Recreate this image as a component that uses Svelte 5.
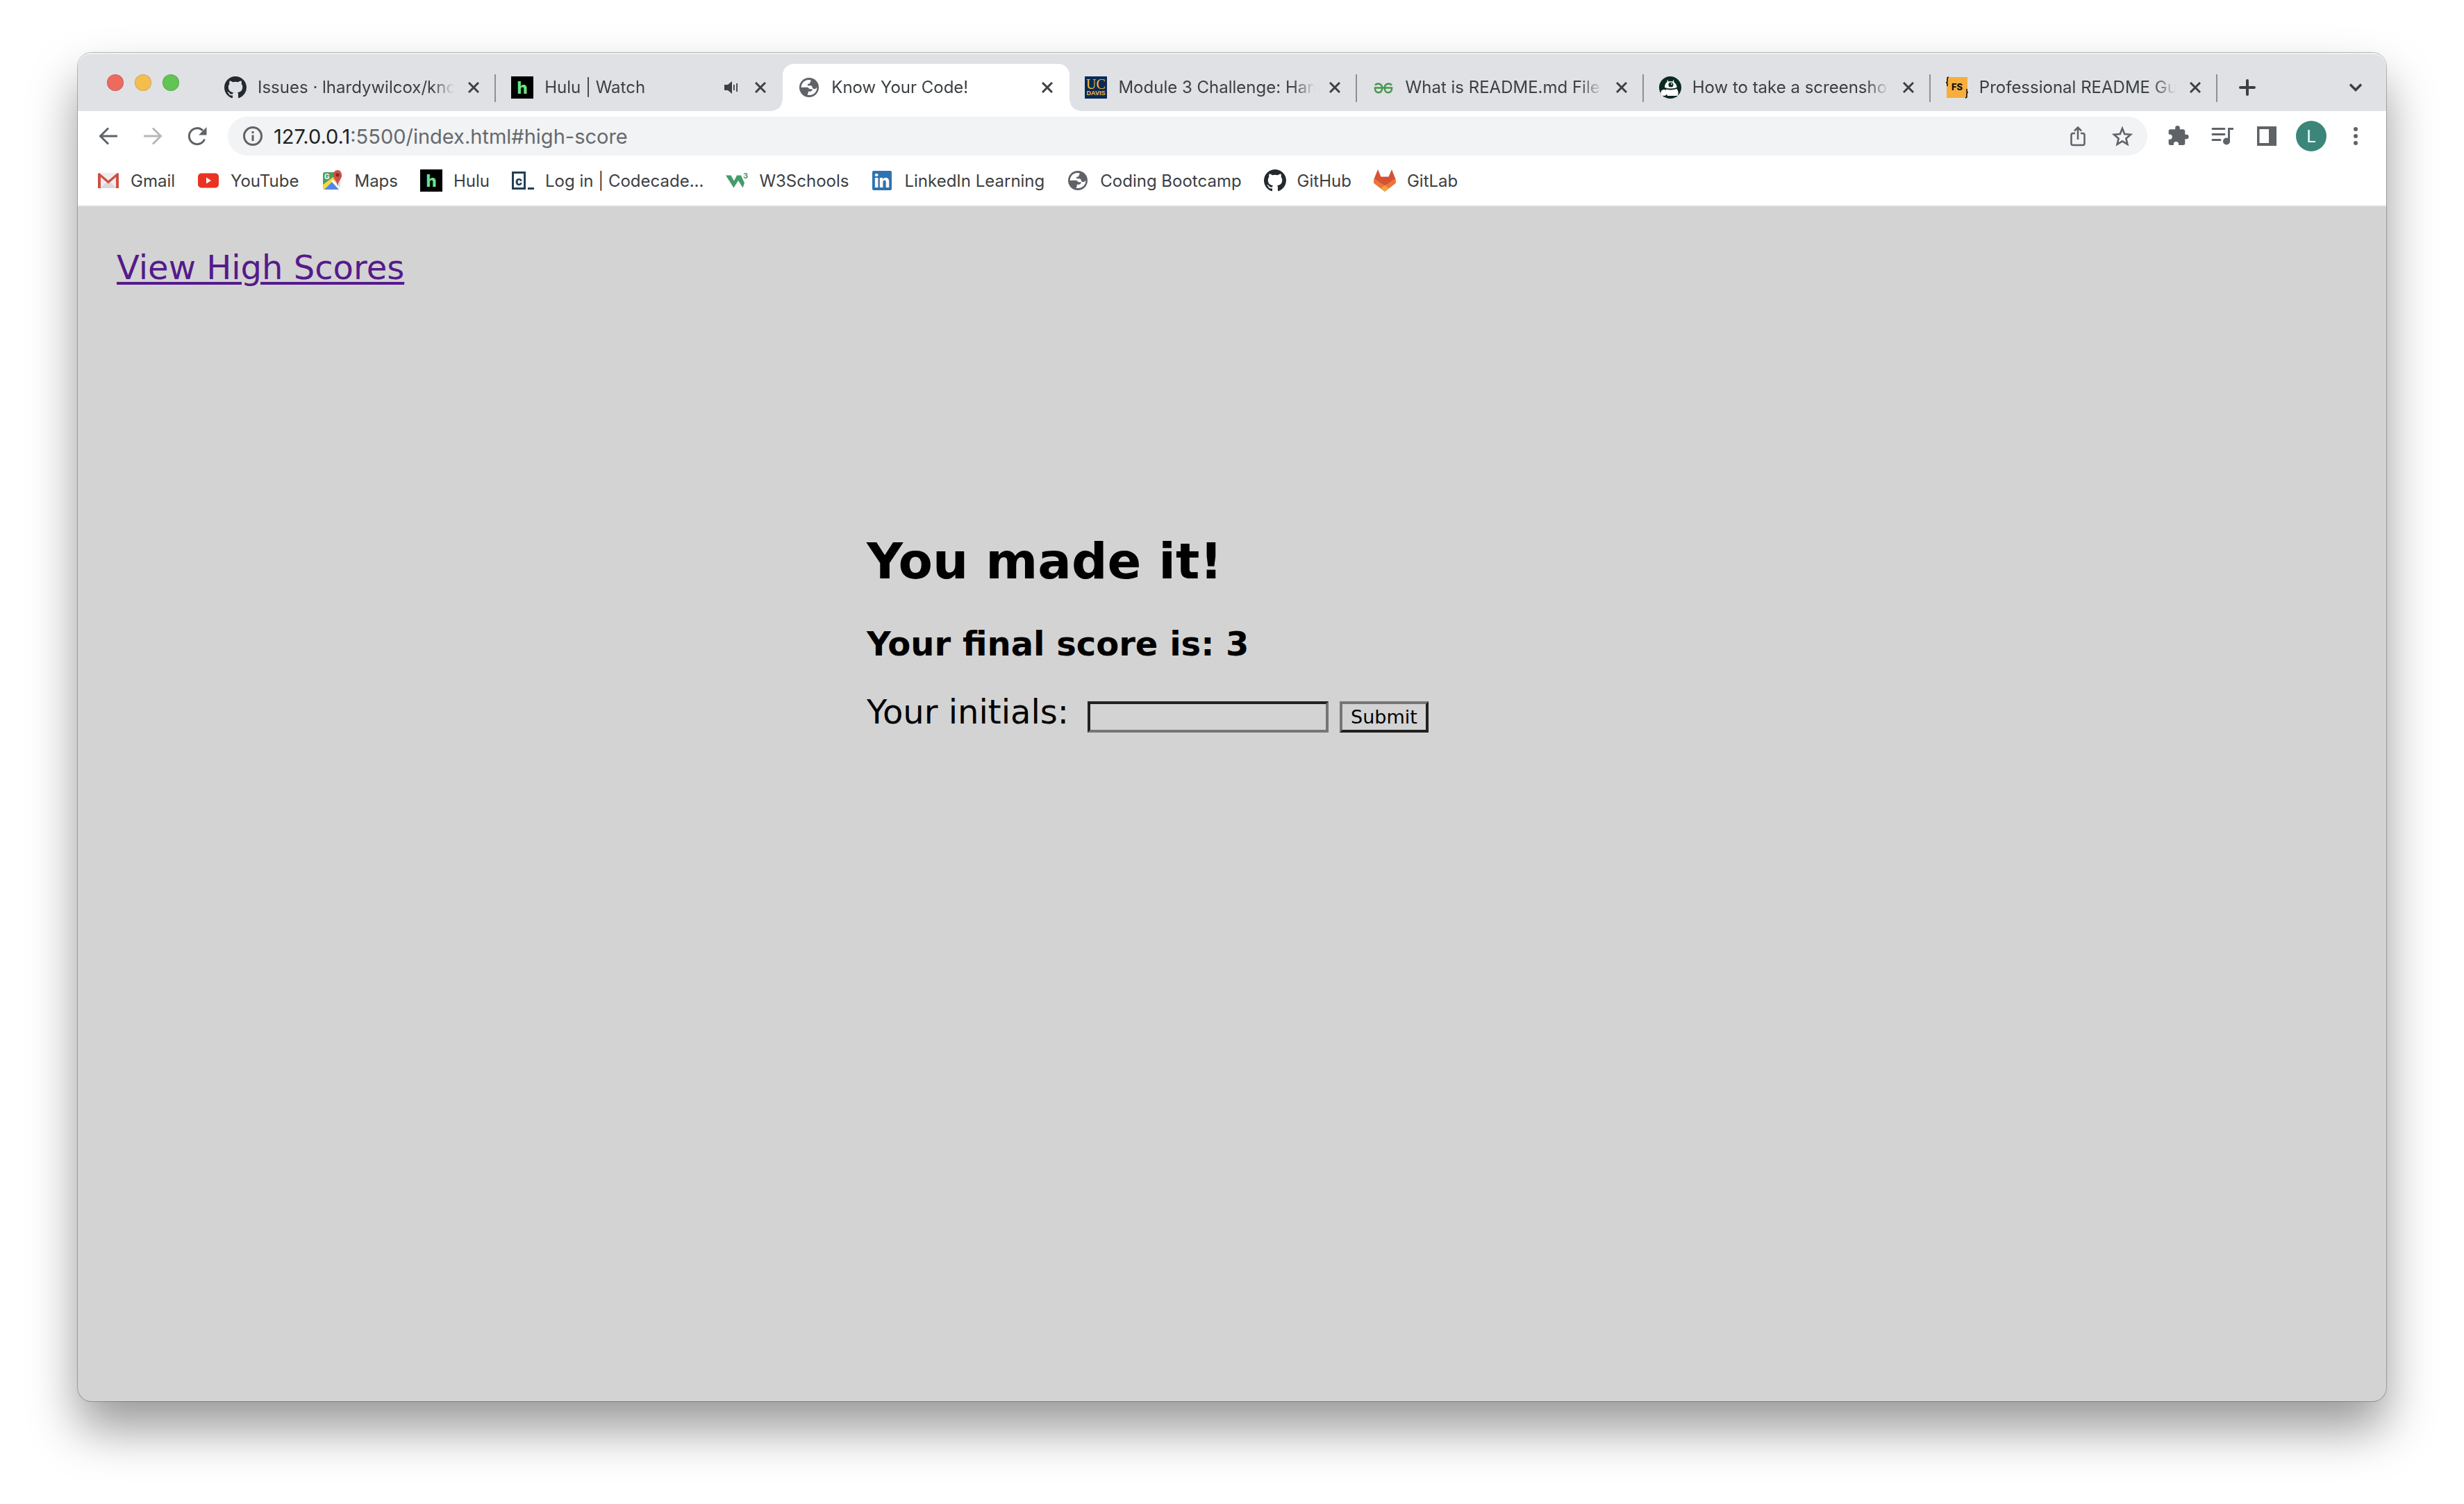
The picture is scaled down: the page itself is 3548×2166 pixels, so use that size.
<script>
  const tabs = [
    { icon: 'github', title: 'Issues · lhardywilcox/know' },
    { icon: 'hulu', title: 'Hulu | Watch', audio: true },
    { icon: 'globe', title: 'Know Your Code!', active: true },
    { icon: 'ucdavis', title: 'Module 3 Challenge: Hard' },
    { icon: 'geeks', title: 'What is README.md File?' },
    { icon: 'octo', title: 'How to take a screenshot' },
    { icon: 'fullstack', title: 'Professional README Gui' }
  ];
  const bookmarks = [
    { icon: 'gmail', title: 'Gmail' },
    { icon: 'youtube', title: 'YouTube' },
    { icon: 'maps', title: 'Maps' },
    { icon: 'hulu', title: 'Hulu' },
    { icon: 'codecademy', title: 'Log in | Codecade...' },
    { icon: 'w3', title: 'W3Schools' },
    { icon: 'linkedin', title: 'LinkedIn Learning' },
    { icon: 'globe', title: 'Coding Bootcamp' },
    { icon: 'github', title: 'GitHub' },
    { icon: 'gitlab', title: 'GitLab' }
  ];
  let initials = $state('');
</script>

{#snippet site(name)}
  <svg class="site" viewBox="0 0 32 32" aria-hidden="true">
    {#if name === 'github'}
      <path fill="#24292f" transform="scale(2)" d="M8 0C3.58 0 0 3.58 0 8c0 3.54 2.29 6.53 5.47 7.59.4.07.55-.17.55-.38 0-.19-.01-.82-.01-1.49-2.01.37-2.53-.49-2.69-.94-.09-.23-.48-.94-.82-1.13-.28-.15-.68-.52-.01-.53.63-.01 1.08.58 1.23.82.72 1.21 1.87.87 2.33.66.07-.52.28-.87.51-1.07-1.78-.2-3.64-.89-3.64-3.95 0-.87.31-1.59.82-2.15-.08-.2-.36-1.02.08-2.12 0 0 .67-.21 2.2.82.64-.18 1.32-.27 2-.27s1.36.09 2 .27c1.53-1.04 2.2-.82 2.2-.82.44 1.1.16 1.92.08 2.12.51.56.82 1.27.82 2.15 0 3.07-1.87 3.75-3.65 3.95.29.25.54.73.54 1.48 0 1.07-.01 1.93-.01 2.2 0 .21.15.46.55.38A8.01 8.01 0 0 0 16 8c0-4.42-3.58-8-8-8z" />
    {:else if name === 'hulu'}
      <rect width="32" height="32" fill="#000" />
      <text x="16" y="25" text-anchor="middle" font-size="24" font-weight="800" fill="#66e589">h</text>
    {:else if name === 'globe'}
      <circle cx="16" cy="16" r="14" fill="#5f6368" />
      <path fill="#fff" d="M18 5.500C11 3.500 4.500 9.500 4.700 16L9.300 15.700H12.500C16 15.700 15.500 18.300 17.500 18.300H20.700Q20.500 21.500 18 21.700H14.700V24L13.500 26.800C21 28.500 28 23 27.300 15.800Q26 18.200 24 18.200Q21 18 20.700 15.500Q20.500 13.300 18 13.300H14V10.700H16Q17.500 10.500 17.500 8.500Q18.700 8 18.700 5.800z" />
    {:else if name === 'ucdavis'}
      <rect width="32" height="32" fill="#0b2a55" />
      <text class="serif" x="16" y="18" text-anchor="middle" font-size="20" fill="#f5c044">UC</text>
      <text class="sans" x="16" y="27" text-anchor="middle" font-size="9" font-weight="700" fill="#f5c044">DAVIS</text>
    {:else if name === 'geeks'}
      <path d="M4 12.500q2-2 5-2a6 6 0 0 1 5 8a5 5 0 0 1-10-.5v-1.500h24v1.500a5 5 0 0 1-10 .5a6 6 0 0 1 5-8q3 0 5 2" fill="none" stroke="#4a9650" stroke-width="2.500" />
    {:else if name === 'octo'}
      <circle cx="16" cy="16" r="16" fill="#0d2a20" />
      <path fill="#fff" d="M12 4.500l1.500 3q3-1 6 0l1.500-3 .5 4q4 2.500 4 7.500-9 3-17.500 0 0-5.500 3.500-8z" />
      <circle cx="17" cy="12" r="3.500" fill="#0d2a20" />
      <circle cx="18" cy="11" r="1" fill="#fff" />
      <path fill="#fff" d="M10 18.500q8 2 15.500-.5 3.500 5 1 10H12q-2-4-2-9.500z" />
      <circle cx="7" cy="23.500" r="4.500" fill="#fff" />
      <path d="M6 28.500q10 2 20 0" fill="none" stroke="#0d2a20" stroke-width="1.500" />
    {:else if name === 'fullstack'}
      <rect x="1" y="1" width="30" height="30" fill="#f7ae3c" />
      <text x="16" y="20" text-anchor="middle" font-size="13" font-weight="800" fill="#111">FS</text>
      <path d="M4 1Q2 1 2 4v3q0 2-2 2q2 0 2 2v3M28 31q2 0 2-3v-3q0-2 2-2q-2 0-2-2v-3" fill="none" stroke="#111" stroke-width="1.600" />
    {:else if name === 'gmail'}
      <rect x="1" y="5" width="30" height="22" rx="2" fill="#eee" />
      <path fill="#d8d8d8" d="M4 27l12-11 12 11z" />
      <path fill="#d04f41" d="M1 27V7q0-2 2-2l13 11L29 5q2 0 2 2v20h-4V11L16 20.500 5 11v16z" />
    {:else if name === 'youtube'}
      <rect x="1" y="5.500" width="30" height="21" rx="5" fill="#ea3323" />
      <path fill="#fff" d="M13 11.500v9l7-4.500z" />
    {:else if name === 'maps'}
      <rect x="3" y="4" width="25" height="25" rx="3" fill="#4a9f63" />
      <path fill="#dcdcdc" d="M17 17l11-4v14z" />
      <path fill="#f9d648" d="M3 22L19 10l4 6L5 29H3z" />
      <path fill="#5187ec" d="M5 29l11-11 11 11z" />
      <path fill="#fff" d="M15 17l2-2 11 11v3h-2z" />
      <text x="5" y="14" font-size="10" font-weight="700" fill="#fff">G</text>
      <path fill="#cf5143" d="M24 24q-1-6-4-9.500C15.500 9 18.500 1 24 1s8.500 8 4 13.500Q25 18 24 24z" />
      <circle cx="24" cy="8" r="2.500" fill="#7b2a24" />
    {:else if name === 'codecademy'}
      <rect x="1.500" y="4.500" width="17" height="23" fill="#fff" stroke="#204056" stroke-width="3" />
      <text x="10" y="22.500" text-anchor="middle" font-size="17" font-weight="800" fill="#204056">c</text>
      <path fill="#204056" d="M23 26h9v3h-9z" />
    {:else if name === 'w3'}
      <path fill="#459b6c" d="M0 8.500h7.500l4.500 8 4-8h6l5 11-2.500 7-6.500-10.500-6.500 10.500z" />
      <text x="25" y="13" font-size="11" font-weight="700" fill="#459b6c">3</text>
    {:else if name === 'linkedin'}
      <rect x="2" y="2" width="28" height="28" rx="2" fill="#2e73b0" />
      <text x="16" y="26" text-anchor="middle" font-size="25" font-weight="800" fill="#fff">in</text>
    {:else if name === 'gitlab'}
      <path fill="#d65136" d="M0 15L6 0l4.500 10.500h11L26 0l6 15-16 8.500z" />
      <path fill="#ed7638" d="M1 13l15 10.500L31 13l1 4q.5 2-1 3.500L16 32 1 20.500Q-.5 19 0 17z" />
      <path fill="#f0a63f" d="M16 22.500l5.500 5L16 32l-5.500-4.500z" />
    {/if}
  </svg>
{/snippet}

{#snippet cross()}
  <svg class="cross" viewBox="0 0 16 16" aria-hidden="true"><path d="M1 1l14 14M15 1L1 15" /></svg>
{/snippet}

<div class="desktop">
  <div class="window">
    <header class="strip">
      <div class="lights">
        <button class="light red" aria-label="Close window"></button>
        <button class="light amber" aria-label="Minimise window"></button>
        <button class="light green" aria-label="Zoom window"></button>
      </div>
      <div class="tabs" role="tablist">
        {#each tabs as tab}
          <div class="tab" class:active={tab.active} role="tab" tabindex="0" aria-selected={!!tab.active}>
            {@render site(tab.icon)}
            <span class="title">{tab.title}</span>
            {#if tab.audio}
              <svg class="audio" viewBox="0 0 24 18" aria-hidden="true">
                <path fill="#3c4043" d="M0 5h5l6-5v18l-6-5H0zM13 5h1.800v8H13zM17.200 3H19v12h-1.800z" />
              </svg>
            {/if}
            <button class="close" aria-label="Close tab">{@render cross()}</button>
          </div>
        {/each}
      </div>
      <div class="strip-end">
        <button aria-label="New tab">
          <svg width="24" height="24" viewBox="0 0 24 24"><path d="M12 2v20M2 12h20" fill="none" stroke="#3c4043" stroke-width="4" stroke-linecap="round" /></svg>
        </button>
        <button aria-label="Search tabs">
          <svg width="18" height="12" viewBox="0 0 18 12"><path d="M1 1.500l8 8 8-8" fill="none" stroke="#3c4043" stroke-width="3.500" /></svg>
        </button>
      </div>
    </header>

    <nav class="toolbar" aria-label="Navigation">
      <button class="tool" aria-label="Back">
        <svg viewBox="0 0 32 32"><path class="line" d="M29 16H5M16 4.500L4.500 16 16 27.500" /></svg>
      </button>
      <button class="tool faint" aria-label="Forward" disabled>
        <svg viewBox="0 0 32 32"><path class="line" d="M3 16h24M16 4.500L27.500 16 16 27.500" /></svg>
      </button>
      <button class="tool" aria-label="Reload">
        <svg viewBox="0 0 32 32"><path class="line" d="M26.500 20.500a11.500 11.500 0 1 1-2.500-12.500" /><path fill="#5f6368" d="M29.500 3v11.500H18z" /></svg>
      </button>
      <div class="omnibox">
        <svg class="info" viewBox="0 0 28 28" aria-hidden="true">
          <circle cx="14" cy="14" r="12.500" fill="none" stroke="#5f6368" stroke-width="3" />
          <path fill="#5f6368" d="M12.500 7h3v3h-3zM12.500 12.500h3V21h-3z" />
        </svg>
        <a class="url" href="#high-score"><b>127.0.0.1</b>:5500/index.html#high-score</a>
        <button class="tool" aria-label="Share">
          <svg viewBox="0 0 32 32"><path d="M12 12H9q-2.500 0-2.500 2.500v12Q6.500 29 9 29h14q2.500 0 2.500-2.500v-12Q25.500 12 23 12h-3M16 21V4M11 8.500L16 3.500l5 5" fill="none" stroke="#5f6368" stroke-width="2.500" /></svg>
        </button>
        <button class="tool" aria-label="Bookmark this page">
          <svg viewBox="0 0 32 32"><path d="M16 5l3.300 8 8.700.7-6.600 5.700 2 8.400L16 23.300l-7.400 4.500 2-8.400L4 13.700l8.700-.7z" fill="none" stroke="#5f6368" stroke-width="2.600" /></svg>
        </button>
      </div>
      <button class="tool" aria-label="Extensions">
        <svg viewBox="0 0 32 32"><path fill="#5f6368" d="M28.300 13.700h-2V8.900a2.700 2.700 0 0 0-2.600-2.600h-4.900v-2a3.300 3.300 0 0 0-6.600 0v2H5.300a2.600 2.600 0 0 0-2.600 2.600v4.600h1.500a3.600 3.600 0 0 1 0 7.200H2.700v5.600A2.600 2.600 0 0 0 5.300 29h4.600v-1.500a3.600 3.600 0 0 1 7.200 0V29h6.600a2.600 2.600 0 0 0 2.600-2.700v-6h2a3.300 3.300 0 0 0 0-6.600z" /></svg>
      </button>
      <button class="tool" aria-label="Media controls">
        <svg viewBox="0 0 32 32"><path d="M2 5.500h17M2 13.500h17M2 21.500h11M31 5.500h-5.500V24" fill="none" stroke="#5f6368" stroke-width="3" stroke-linecap="round" /><circle cx="22" cy="23.500" r="5" fill="#5f6368" /></svg>
      </button>
      <button class="tool" aria-label="Side panel">
        <svg viewBox="0 0 32 32"><path fill="#5f6368" fill-rule="evenodd" d="M2 2h28v28H2zM5.500 6v20H19V6z" /></svg>
      </button>
      <button class="avatar" aria-label="Profile">L</button>
      <button class="tool" aria-label="More">
        <svg viewBox="0 0 32 32"><g fill="#5f6368"><circle cx="16" cy="6" r="3" /><circle cx="16" cy="16" r="3" /><circle cx="16" cy="26" r="3" /></g></svg>
      </button>
    </nav>

    <nav class="bookmarks" aria-label="Bookmarks">
      {#each bookmarks as mark}
        <a href="#bookmark">{@render site(mark.icon)}<span>{mark.title}</span></a>
      {/each}
    </nav>

    <main>
      <a class="scores" href="#high-score">View High Scores</a>
      <section>
        <h1>You made it!</h1>
        <h2>Your final score is: 3</h2>
        <form onsubmit={(event) => event.preventDefault()}>
          <label for="initials">Your initials:</label>
          <input id="initials" type="text" bind:value={initials} />
          <button type="submit">Submit</button>
        </form>
      </section>
    </main>
  </div>
</div>

<style>
  :global(body) {
    background: #fff;
  }
  .desktop {
    box-sizing: border-box;
    display: flex;
    min-height: 100vh;
    padding: 76px 112px 148px;
    overflow: hidden;
    font-family: Inter, "Liberation Sans", sans-serif;
    font-size: 24px;
    color: #3c4043;
  }
  .window {
    flex: 1;
    min-width: 0;
    display: flex;
    flex-direction: column;
    border-radius: 20px;
    background: #d3d3d3;
    box-shadow: 0 0 0 1px rgba(0, 0, 0, 0.25), 0 40px 70px rgba(0, 0, 0, 0.4);
  }
  button {
    padding: 0;
    border: 0;
    background: none;
    color: inherit;
    font: inherit;
  }
  svg {
    display: block;
    flex: none;
  }
  .site {
    width: 32px;
    height: 32px;
  }
  .serif {
    font-family: "Liberation Serif", serif;
  }
  .sans {
    font-family: "Liberation Sans", sans-serif;
  }
  .strip {
    display: flex;
    height: 84px;
    border-radius: 20px 20px 0 0;
    background: #dfe1e5;
    box-shadow: inset 0 2px 0 #eff0f2;
  }
  .lights {
    box-sizing: border-box;
    display: flex;
    gap: 16px;
    width: 189px;
    padding: 31px 0 0 42px;
  }
  .light {
    box-sizing: border-box;
    width: 24px;
    height: 24px;
    border: 1px solid rgba(0, 0, 0, 0.12);
    border-radius: 50%;
  }
  .red {
    background: #ec6a5e;
  }
  .amber {
    background: #f4be4f;
  }
  .green {
    background: #61c454;
  }
  .tabs {
    flex: 1;
    min-width: 0;
    display: flex;
    padding-top: 16px;
  }
  .tab {
    box-sizing: border-box;
    flex: 1 1 0;
    min-width: 0;
    display: flex;
    align-items: center;
    gap: 16px;
    padding: 0 20px 0 22px;
    position: relative;
  }
  .tab::after {
    content: "";
    position: absolute;
    right: 0;
    top: 15px;
    width: 2px;
    height: 40px;
    background: #8d9095;
  }
  .title {
    flex: 1;
    min-width: 0;
    overflow: hidden;
    white-space: nowrap;
    line-height: 32px;
    mask-image: linear-gradient(to left, transparent, #000 32px);
  }
  .close {
    display: grid;
    place-items: center;
    width: 24px;
    height: 32px;
  }
  .cross {
    width: 16px;
    height: 16px;
    fill: none;
    stroke: #3c4043;
    stroke-width: 3;
  }
  .audio {
    width: 24px;
    height: 18px;
  }
  .tab.active {
    border-radius: 16px 16px 0 0;
    background: #fff;
  }
  .tab.active::before,
  .tab.active::after {
    content: "";
    position: absolute;
    top: auto;
    bottom: 0;
    width: 16px;
    height: 16px;
  }
  .tab.active::before {
    right: 100%;
    background: radial-gradient(circle at 0 0, #dfe1e5 15px, #fff 16px);
  }
  .tab.active::after {
    right: auto;
    left: 100%;
    background: radial-gradient(circle at 100% 0, #dfe1e5 15px, #fff 16px);
  }
  .tab:has(+ .active)::after {
    display: none;
  }
  .strip-end {
    box-sizing: border-box;
    display: flex;
    justify-content: space-between;
    align-items: center;
    width: 243px;
    padding: 16px 35px 0 31px;
  }
  .toolbar {
    display: flex;
    align-items: center;
    gap: 32px;
    height: 72px;
    padding: 0 28px;
    background: #fff;
  }
  .tool,
  .tool svg {
    display: block;
    width: 32px;
    height: 32px;
  }
  .line {
    fill: none;
    stroke: #5f6368;
    stroke-width: 3;
  }
  .faint {
    opacity: 0.45;
  }
  .omnibox {
    flex: 1;
    min-width: 0;
    display: flex;
    align-items: center;
    gap: 32px;
    height: 56px;
    margin: 0 -4px;
    padding: 0 20px 0 22px;
    border-radius: 28px;
    background: #f1f3f4;
  }
  .info {
    width: 28px;
    height: 28px;
  }
  .url {
    flex: 1;
    margin-left: -16px;
    font-size: 29px;
    color: #66696d;
    text-decoration: none;
  }
  .url b {
    font-weight: 400;
    color: #202124;
  }
  .avatar {
    width: 44px;
    height: 44px;
    margin: 0 -6px;
    border-radius: 50%;
    background: #3b8679;
    color: #fff;
  }
  .bookmarks {
    display: flex;
    align-items: center;
    gap: 32px;
    height: 56px;
    padding: 0 28px 8px;
    border-bottom: 2px solid #dcdcdc;
    background: #fff;
  }
  .bookmarks a {
    display: flex;
    align-items: center;
    gap: 16px;
    color: inherit;
    text-decoration: none;
    white-space: nowrap;
  }
  main {
    flex: 1;
    padding: 58px 56px;
    font-family: Verdana, "DejaVu Sans", sans-serif;
    font-size: 48px;
    line-height: 58px;
    color: #000;
  }
  .scores {
    color: #551a8b;
    text-decoration-thickness: 4px;
    text-underline-offset: 4px;
  }
  section {
    width: 1052px;
    margin: 350px auto 0;
  }
  h1 {
    margin: 0 0 46px;
    font-size: 72px;
    line-height: 88px;
  }
  h2 {
    margin: 0 0 40px;
    font-size: 48px;
  }
  form {
    display: flex;
    align-items: baseline;
    gap: 16px;
  }
  label {
    min-width: 302px;
  }
  input,
  form button {
    box-sizing: border-box;
    height: 45px;
    font: 27px Verdana, "DejaVu Sans", sans-serif;
    color: #000;
    background: transparent;
  }
  input {
    width: 347px;
    padding: 2px 4px;
    border: 4px inset #767676;
  }
  form button {
    padding: 0 12px;
    border: 4px outset #767676;
  }
</style>
